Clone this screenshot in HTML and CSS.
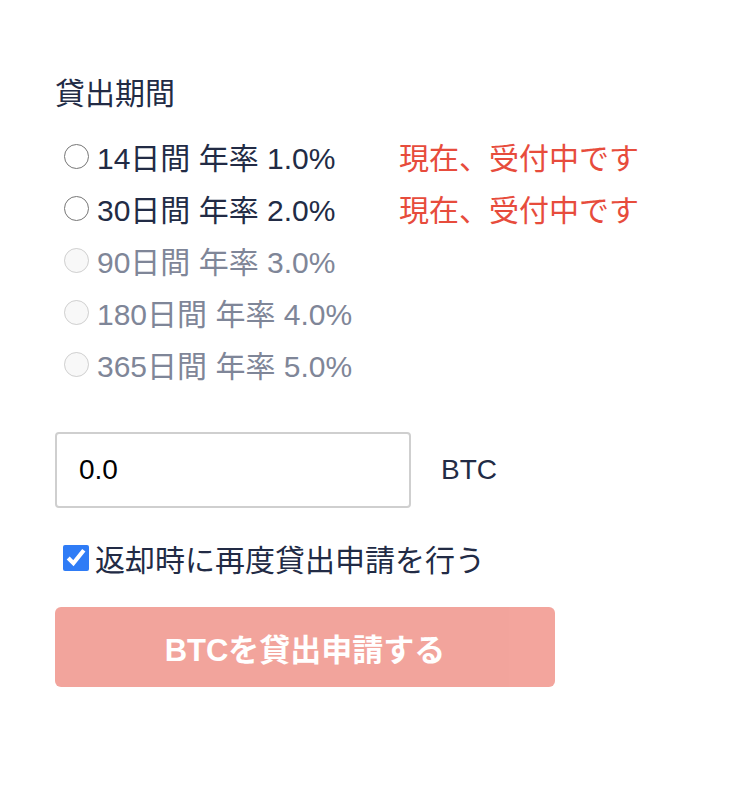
FILE: index.html
```html
<!DOCTYPE html>
<html>
<head>
    <meta charset="UTF-8">
    <title>貸出申請</title>
    <link rel="stylesheet" href="styles.css">
</head>
<body>
    <div class="container">
        <div class="title">貸出期間</div>

        <div class="terms">
            <label class="term">
                <input type="radio" name="term">
                <span class="term-text">14日間 年率 1.0%</span>
                <span class="status">現在、受付中です</span>
            </label>
            <label class="term">
                <input type="radio" name="term">
                <span class="term-text">30日間 年率 2.0%</span>
                <span class="status">現在、受付中です</span>
            </label>
            <label class="term disabled">
                <input type="radio" name="term" disabled>
                <span class="term-text">90日間 年率 3.0%</span>
            </label>
            <label class="term disabled">
                <input type="radio" name="term" disabled>
                <span class="term-text">180日間 年率 4.0%</span>
            </label>
            <label class="term disabled">
                <input type="radio" name="term" disabled>
                <span class="term-text">365日間 年率 5.0%</span>
            </label>
        </div>

        <div class="amount">
            <input type="text" class="amount-input" value="0.0">
            <span class="unit">BTC</span>
        </div>

        <label class="renew">
            <input type="checkbox" checked>
            <span>返却時に再度貸出申請を行う</span>
        </label>

        <button class="submit" disabled>BTCを貸出申請する</button>
    </div>
</body>
</html>
```

FILE: styles.css
```css
body {
    margin: 0;
    background-color: #fff;
    font-family: "Liberation Sans", "Noto Sans CJK JP", sans-serif;
    color: #222b45;
}
.container {
    padding: 72px 55px 40px;
}
.title {
    font-size: 30px;
    line-height: 44px;
}
.terms {
    margin-top: 14px;
    display: flex;
    flex-direction: column;
}
.term {
    display: flex;
    align-items: center;
    height: 52px;
    font-size: 30px;
}
.term input {
    width: 25px;
    height: 25px;
    margin: 0 8px 0 9px;
}
.term-text {
    width: 302px;
}
.term.disabled {
    color: #7f8698;
}
.status {
    color: #e74c3c;
}
.amount {
    margin-top: 42px;
    display: flex;
    align-items: center;
}
.amount-input {
    width: 356px;
    height: 76px;
    box-sizing: border-box;
    padding: 0 22px;
    border: 2px solid #cfcfcf;
    border-radius: 4px;
    font-family: "Liberation Sans", sans-serif;
    font-size: 28px;
    color: #000;
}
.unit {
    margin-left: 30px;
    font-size: 28px;
}
.renew {
    margin-top: 30px;
    display: flex;
    align-items: center;
    height: 40px;
    font-size: 30px;
}
.renew input {
    width: 26px;
    height: 26px;
    margin: 0 6px 0 8px;
    accent-color: #2f7cf6;
}
.submit {
    margin-top: 29px;
    width: 500px;
    height: 80px;
    border: none;
    border-radius: 6px;
    background-color: #e74c3c;
    opacity: 0.5;
    color: #fff;
    font-family: "Liberation Sans", "Noto Sans CJK JP", sans-serif;
    font-size: 31px;
    font-weight: bold;
}
```
